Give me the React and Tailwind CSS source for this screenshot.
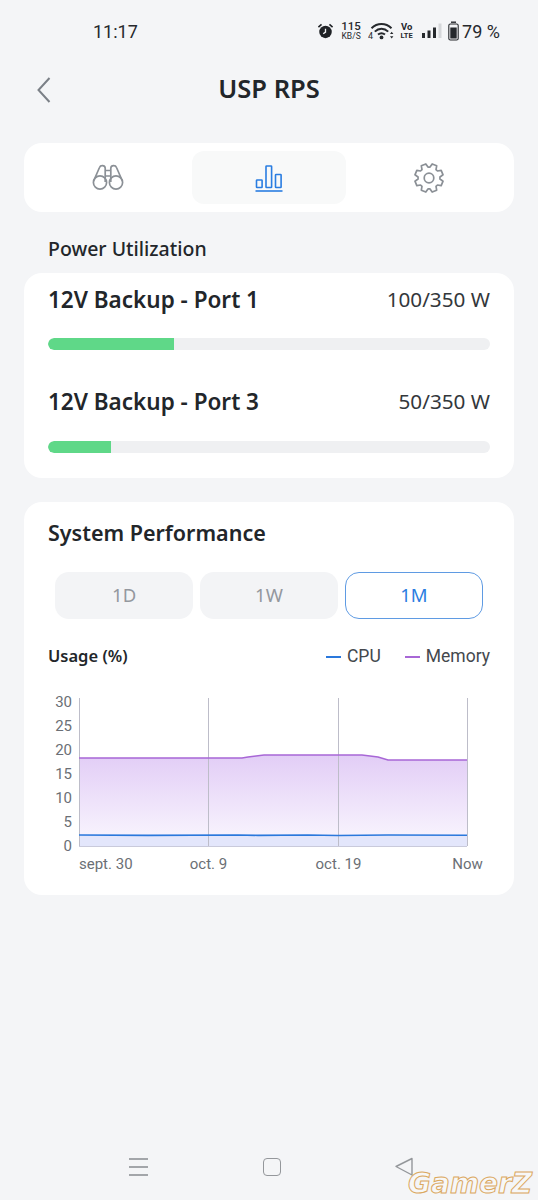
import React from "react";

function Alarm() {
  return (
    <svg width="17" height="18" viewBox="0 0 18 18" className="shrink-0">
      <circle cx="9" cy="10" r="6.6" fill="#1f2226" />
      <path d="M9 6.5V10.2L6.6 12" stroke="#f3f4f6" strokeWidth="1.4" fill="none" />
      <path d="M1.5 4.8L4.8 2M16.5 4.8L13.2 2" stroke="#1f2226" strokeWidth="1.7" fill="none" />
    </svg>
  );
}

function Wifi() {
  return (
    <svg width="26" height="18" viewBox="0 0 26 18" className="shrink-0">
      <path d="M3.5 6.2C9.3 0.6 17.7 0.6 23.5 6.2" stroke="#26292d" strokeWidth="2" fill="none" />
      <path d="M6.8 9.6C10.8 5.8 16.2 5.8 20.2 9.6" stroke="#26292d" strokeWidth="2" fill="none" />
      <path d="M10 12.6C12.2 10.8 14.8 10.8 17 12.6" stroke="#26292d" strokeWidth="2" fill="none" />
      <circle cx="13.5" cy="15.4" r="1.9" fill="#26292d" />
      <path d="M22 12l1.7-2.2 1.7 2.2zM22 14.2l1.7 2.2 1.7-2.2z" fill="#26292d" />
      <text x="0" y="16.8" fontSize="9" fill="#26292d" fontFamily="Roboto, sans-serif">4</text>
    </svg>
  );
}

function Signal() {
  return (
    <svg width="22" height="16" viewBox="0 0 22 16" className="shrink-0">
      <rect x="1" y="10" width="3" height="5" fill="#26292d" />
      <rect x="6.5" y="7.5" width="3" height="7.5" fill="#26292d" />
      <rect x="12" y="4.5" width="3" height="10.5" fill="#26292d" />
      <rect x="17.5" y="0.5" width="3" height="14.5" fill="#d5d7da" />
    </svg>
  );
}

function Battery() {
  return (
    <svg width="11" height="20" viewBox="0 0 11 20" className="shrink-0">
      <rect x="3" y="0.5" width="5" height="1.4" fill="#26292d" />
      <rect x="0.8" y="3" width="9.4" height="16" rx="1.6" fill="none" stroke="#26292d" strokeWidth="1.1" />
      <rect x="2.3" y="6.5" width="6.4" height="11" fill="#26292d" />
    </svg>
  );
}

function Binoculars() {
  return (
    <svg width="32" height="28" viewBox="0 0 32 28" fill="none" stroke="#8b9096" strokeWidth="1.7">
      <circle cx="8" cy="18.5" r="6.6" />
      <circle cx="24" cy="18.5" r="6.6" />
      <path d="M1.6 17L7.5 3.5C8.5 1 12.8 1 13.2 4V18" />
      <path d="M30.4 17L24.5 3.5C23.5 1 19.2 1 18.8 4V18" />
      <path d="M13.2 6.5H18.8M13.2 12H18.8" />
    </svg>
  );
}

function Bars() {
  return (
    <svg width="28" height="28" viewBox="0 0 28 28" fill="none" stroke="#2a7de1" strokeWidth="1.6">
      <rect x="1.5" y="16" width="5.6" height="7.5" rx="0.6" />
      <rect x="11" y="2" width="5.6" height="21.5" rx="0.6" />
      <rect x="20.5" y="10.5" width="5.6" height="13" rx="0.6" />
      <path d="M0.5 27H27.5" />
    </svg>
  );
}

const gearPoints = (() => {
  const pts = [];
  const teeth = 8;
  for (let i = 0; i < teeth; i++) {
    const a = (i / teeth) * Math.PI * 2 + Math.PI / 8;
    const add = (offset, r) => {
      const t = a + offset;
      pts.push(`${(16 + r * Math.sin(t)).toFixed(2)},${(16 - r * Math.cos(t)).toFixed(2)}`);
    };
    add(-0.3, 11);
    add(-0.17, 14.4);
    add(0.17, 14.4);
    add(0.3, 11);
  }
  return pts.join(" ");
})();

function Gear() {
  return (
    <svg width="32" height="32" viewBox="0 0 32 32" fill="none" stroke="#8b9096" strokeWidth="1.7" strokeLinejoin="round">
      <polygon points={gearPoints} />
      <circle cx="16" cy="16" r="4.8" />
    </svg>
  );
}

function Port({ name, value, pct, mt, barMt }) {
  return (
    <div className={mt}>
      <div className="flex items-center justify-between h-[30px]">
        <span className="text-[22.5px] font-semibold text-[#22262a]">{name}</span>
        <span className="text-[20.7px] text-[#33373b]">{value}</span>
      </div>
      <div className={`${barMt} h-[12px] rounded-full bg-[#eff0f2] overflow-hidden`}>
        <div className="h-full rounded-l-full bg-[#5fd888]" style={{ width: pct }} />
      </div>
    </div>
  );
}

function Chart() {
  const labelCls = "fill-[#6b6f75]";
  const ys = [[30, 707], [25, 731], [20, 755], [15, 779], [10, 803], [5, 827], [0, 851]];
  const Y = (y) => y - 690;
  const memPts = [[31, 758], [194, 758], [200, 757], [216, 755], [314, 755], [330, 757], [340, 760], [419, 760]];
  const memLine = memPts.map(([a, b]) => `${a},${Y(b)}`).join(" ");
  return (
    <svg width="442" height="190" viewBox="0 0 442 190" className="block mt-[21px]">
      <defs>
        <linearGradient id="memFill" x1="0" y1="0" x2="0" y2="1">
          <stop offset="0" stopColor="#e2cdf6" />
          <stop offset="1" stopColor="#f7f2fd" />
        </linearGradient>
      </defs>
      <polygon points={`${memLine} 419,${Y(835)} 31,${Y(835)}`} fill="url(#memFill)" />
      <rect x="31" y={Y(835)} width="388" height="11" fill="#e3e6fb" />
      {[31.5, 160.5, 290.5, 419.5].map((x) => (
        <line key={x} x1={x} x2={x} y1={Y(698)} y2={Y(846)} stroke="#bdbdc9" strokeWidth="1" />
      ))}
      <line x1="31" x2="419" y1={Y(846.5)} y2={Y(846.5)} stroke="#c9cadb" strokeWidth="1" />
      <polyline points={memLine} fill="none" stroke="#a867d6" strokeWidth="1.6" />
      <polyline points={`31,${Y(835)} 100,${Y(835.4)} 190,${Y(835)} 210,${Y(835.4)} 260,${Y(835)} 290,${Y(835.5)} 340,${Y(835)} 419,${Y(835.2)}`} fill="none" stroke="#2a78dc" strokeWidth="1.6" />
      {ys.map(([t, y]) => (
        <text key={t} x="24" y={Y(y)} textAnchor="end" fontSize="15" fontFamily="Roboto, sans-serif" className={labelCls}>{t}</text>
      ))}
      <text x="31" y="179" fontSize="15" fontFamily="Roboto, sans-serif" className={labelCls}>sept. 30</text>
      <text x="160.5" y="179" textAnchor="middle" fontSize="15" fontFamily="Roboto, sans-serif" className={labelCls}>oct. 9</text>
      <text x="290.5" y="179" textAnchor="middle" fontSize="15" fontFamily="Roboto, sans-serif" className={labelCls}>oct. 19</text>
      <text x="419.5" y="179" textAnchor="middle" fontSize="15" fontFamily="Roboto, sans-serif" className={labelCls}>Now</text>
    </svg>
  );
}

export default function App() {
  return (
    <div className="relative w-[538px] h-[1200px] overflow-hidden bg-[#f4f5f7] font-['Noto_Sans',sans-serif]">
      {/* status bar */}
      <div className="h-[62px] flex items-center justify-between pl-[93px] pr-[38px] font-['Roboto',sans-serif] text-[#26292d]">
        <span className="text-[18px]">11:17</span>
        <div className="flex items-center">
          <Alarm />
          <div className="ml-[6px] flex flex-col items-center w-[22px]">
            <span className="text-[11.5px] font-medium leading-[11px]">115</span>
            <span className="text-[8.5px] leading-[9px]">KB/S</span>
          </div>
          <div className="ml-[6px]"><Wifi /></div>
          <div className="ml-[7px] flex flex-col items-center w-[11px] font-bold">
            <span className="text-[9.5px] leading-[9px]">Vo</span>
            <span className="text-[7.5px] leading-[9px]">LTE</span>
          </div>
          <div className="ml-[9px]"><Signal /></div>
          <div className="ml-[5px]"><Battery /></div>
          <span className="ml-[3px] text-[18px]">79 %</span>
        </div>
      </div>

      {/* header */}
      <div className="relative h-[54px] flex items-center justify-center">
        <svg width="16" height="28" viewBox="0 0 16 28" fill="none" stroke="#7b8087" strokeWidth="2" className="absolute left-[36px] top-[14px]">
          <path d="M13.5 2L2.5 14L13.5 26" />
        </svg>
        <h1 className="pb-[2px] text-[25.5px] font-semibold text-[#22262a]">USP RPS</h1>
      </div>

      {/* tabs */}
      <div className="mt-[27px] mx-[24px] h-[69px] rounded-[18px] bg-white flex items-center px-[8px]">
        <div className="w-[152px] flex justify-center"><Binoculars /></div>
        <div className="ml-[8px] w-[154px] h-[53px] rounded-[12px] bg-[#f8f9f9] flex items-center justify-center"><Bars /></div>
        <div className="ml-auto w-[154px] flex justify-center"><Gear /></div>
      </div>

      <h2 className="mt-[22px] ml-[48px] h-[30px] leading-[30px] text-[19.5px] font-medium text-[#22262a]">Power Utilization</h2>

      {/* power */}
      <div className="mt-[9px] mx-[24px] h-[205px] rounded-[18px] bg-white px-[24px] pt-[12px]">
        <Port name="12V Backup - Port 1" value="100/350 W" pct="28.5%" barMt="mt-[23px]" />
        <Port name="12V Backup - Port 3" value="50/350 W" pct="14.25%" mt="mt-[37px]" barMt="mt-[24px]" />
      </div>

      {/* performance */}
      <div className="mt-[24px] mx-[24px] h-[393px] rounded-[18px] bg-white px-[24px] pt-[15px]">
        <h2 className="h-[32px] leading-[32px] text-[21.5px] font-semibold text-[#22262a]">System Performance</h2>
        <div className="mt-[23px] mx-[7px] grid grid-cols-3 gap-[6.5px]">
          <div className="h-[47px] pb-[1px] rounded-[14px] bg-[#f3f4f6] flex items-center justify-center text-[18.5px] text-[#94989e]">1D</div>
          <div className="h-[47px] pb-[1px] rounded-[14px] bg-[#f3f4f6] flex items-center justify-center text-[18.5px] text-[#94989e]">1W</div>
          <div className="h-[47px] pb-[1px] rounded-[14px] border border-[#5f9be3] flex items-center justify-center text-[18.5px] text-[#2a7de1]">1M</div>
        </div>
        <div className="mt-[24px] h-[26px] flex items-center justify-between">
          <span className="text-[16.5px] font-semibold text-[#22262a]">Usage (%)</span>
          <div className="flex items-center text-[17.5px] text-[#44484d] font-['Roboto',sans-serif] pt-[1px]">
            <span className="w-[15px] h-[2px] bg-[#2a78dc] mr-[6px]" />
            <span>CPU</span>
            <span className="w-[15px] h-[2px] bg-[#a867d6] ml-[24px] mr-[6px]" />
            <span>Memory</span>
          </div>
        </div>
        <Chart />
      </div>

      {/* nav */}
      <div className="absolute left-[129px] top-[1158px] w-[19px] flex flex-col gap-[6.5px]">
        <span className="h-[1.5px] bg-[#a3a6aa]" />
        <span className="h-[1.5px] bg-[#a3a6aa]" />
        <span className="h-[1.5px] bg-[#a3a6aa]" />
      </div>
      <div className="absolute left-[263px] top-[1158px] w-[18px] h-[18px] rounded-[4px] border-[1.5px] border-[#94979b]" />
      <svg width="20" height="20" viewBox="0 0 20 20" fill="none" stroke="#94979b" strokeWidth="1.4" strokeLinejoin="round" className="absolute left-[394px] top-[1157px]">
        <path d="M18 1.5V18L2 9.5Z" />
      </svg>
      <span className="absolute left-[408px] top-[1166px] font-['DejaVu_Sans',sans-serif] italic font-bold text-[28px] leading-[36px] text-[#f7f7f7] [-webkit-text-stroke:1px_#dba860]">GamerZ</span>
    </div>
  );
}
